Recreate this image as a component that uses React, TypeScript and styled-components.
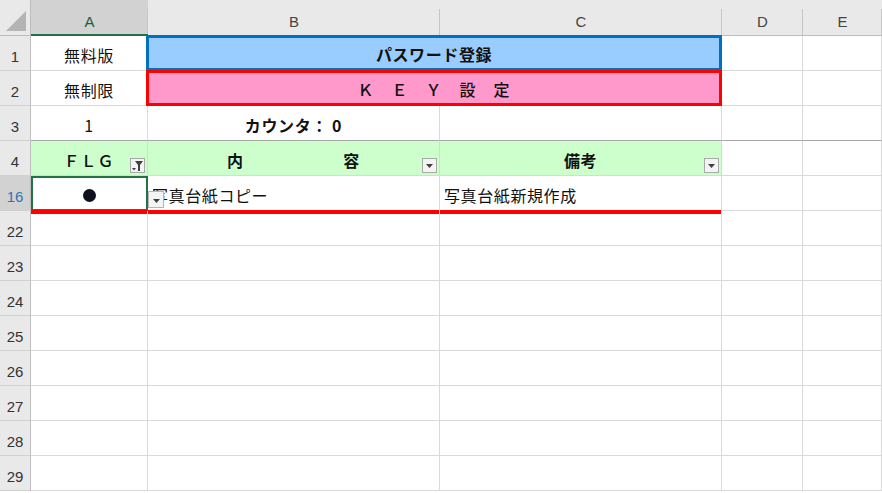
import React from 'react';
import styled, { createGlobalStyle } from 'styled-components';

const GlobalStyle = createGlobalStyle`
  html, body {
    margin: 0;
    padding: 0;
    background: #ffffff;
    overflow: hidden;
  }
  body {
    font-family: "Noto Sans CJK JP", "Noto Sans", sans-serif;
  }
`;

const GRID = '#d9d9d9';
const HEAD_BG = '#e9e9e9';
const HEAD_LINE = '#bdbdbd';

type Fill = 'blue' | 'pink' | 'green' | 'none';

const fills: Record<Fill, { bg: string; border: string }> = {
  blue: { bg: '#99ccff', border: '#0070c0' },
  pink: { bg: '#ff99cc', border: '#ff0000' },
  green: { bg: '#ccffcc', border: 'transparent' },
  none: { bg: '#ffffff', border: 'transparent' },
};

const Sheet = styled.div`
  display: grid;
  grid-template-columns: 31px 117px 292px 282px 81px 79px;
  grid-template-rows: 36px repeat(13, 35px);
  width: 882px;
  height: 493px;
  background: #ffffff;
  color: #111111;
`;

const Corner = styled.div`
  background: ${HEAD_BG};
  border-right: 1px solid ${HEAD_LINE};
  border-bottom: 1px solid ${HEAD_LINE};
  box-sizing: border-box;
  position: relative;

  &::after {
    content: '';
    position: absolute;
    right: 4px;
    bottom: 4px;
    width: 0;
    height: 0;
    border-left: 20px solid transparent;
    border-bottom: 20px solid #b4b4b4;
  }
`;

const ColHead = styled.div<{ $active?: boolean }>`
  position: relative;
  display: flex;
  align-items: center;
  justify-content: center;
  padding-top: 8px;
  box-sizing: border-box;
  background: ${(p) => (p.$active ? '#d2d2d2' : HEAD_BG)};
  border-bottom: ${(p) => (p.$active ? '2px solid #217346' : `1px solid ${HEAD_LINE}`)};
  font-family: "Liberation Sans", Arial, sans-serif;
  font-size: 15px;
  color: ${(p) => (p.$active ? '#1e5c38' : '#444444')};

  &::after {
    content: '';
    position: absolute;
    right: 0;
    top: 9px;
    bottom: 0;
    width: 1px;
    background: #c6c6c6;
  }
`;

const RowHead = styled.div<{ $active?: boolean; $filtered?: boolean }>`
  display: flex;
  align-items: center;
  justify-content: center;
  padding-top: 6px;
  box-sizing: border-box;
  background: ${(p) => (p.$active ? '#d2d2d2' : HEAD_BG)};
  border-right: 1px solid ${HEAD_LINE};
  border-bottom: 1px solid #d0d0d0;
  font-family: "Liberation Sans", Arial, sans-serif;
  font-size: 15px;
  color: ${(p) => (p.$filtered ? '#2e75b6' : '#333333')};
`;

const Cell = styled.div<{
  $fill?: Fill;
  $span?: number;
  $align?: 'left' | 'center';
  $bold?: boolean;
  $freeze?: boolean;
  $underline?: boolean;
}>`
  position: relative;
  grid-column: span ${(p) => p.$span ?? 1};
  display: flex;
  align-items: center;
  justify-content: ${(p) => (p.$align === 'left' ? 'flex-start' : 'center')};
  padding: 4px 4px 0;
  box-sizing: border-box;
  background: ${(p) => fills[p.$fill ?? 'none'].bg};
  border-right: 1px solid ${GRID};
  border-bottom: 1px solid ${(p) => (p.$freeze ? '#a6a6a6' : GRID)};
  font-size: 16px;
  letter-spacing: 0.6px;
  font-weight: ${(p) => (p.$bold ? 700 : 400)};
  white-space: pre;

  ${(p) =>
    p.$underline &&
    `
    &::before {
      content: '';
      position: absolute;
      left: 0;
      right: 0;
      bottom: -4px;
      height: 4px;
      background: #ff0000;
      z-index: 2;
    }
  `}
`;

// merged title bands in rows 1 and 2
const Band = styled(Cell)`
  margin: -1px 0 0 -2px;
  width: calc(100% + 2px);
  border: 3px solid ${(p) => fills[p.$fill ?? 'none'].border};
  padding-top: 2px;
  z-index: 1;
`;

const Selected = styled(Cell)`
  outline: 2px solid #217346;
  outline-offset: -2px;
  z-index: 3;
`;

const Label = styled.span<{ $weight?: number }>`
  font-weight: ${(p) => p.$weight ?? 400};
  letter-spacing: 1px;
`;

const FilterButton = styled.span`
  position: absolute;
  right: 2px;
  bottom: 2px;
  width: 15px;
  height: 15px;
  box-sizing: border-box;
  background: #f4f4f4;
  border: 1px solid #a9a9a9;
  display: flex;
  align-items: center;
  justify-content: center;
`;

const DropButton = styled.span`
  position: absolute;
  left: calc(100% + 1px);
  bottom: 2px;
  width: 16px;
  height: 17px;
  box-sizing: border-box;
  background: #f4f4f4;
  border: 1px solid #b5b5b5;
  display: flex;
  align-items: flex-end;
  justify-content: center;
  padding-bottom: 4px;
  z-index: 4;
`;

const Dot = styled.span`
  width: 13px;
  height: 13px;
  border-radius: 50%;
  background: #0f0f1e;
`;

const Arrow = () => (
  <svg width="7" height="4" viewBox="0 0 7 4">
    <path d="M0 0 H7 L3.5 4 Z" fill="#404040" />
  </svg>
);

const FunnelArrow = () => (
  <svg width="11" height="10" viewBox="0 0 11 10">
    <path d="M3 0 H11 L8 4 V10 H6 V4 Z" fill="#404040" />
    <path d="M0 7 H4 L2 9.5 Z" fill="#404040" />
  </svg>
);

const Empty = ({ freeze }: { freeze?: boolean }) => <Cell $freeze={freeze} />;

const blankRows = [22, 23, 24, 25, 26, 27, 28, 29];

export default function App() {
  return (
    <>
      <GlobalStyle />
      <Sheet>
        <Corner />
        <ColHead $active>A</ColHead>
        <ColHead>B</ColHead>
        <ColHead>C</ColHead>
        <ColHead>D</ColHead>
        <ColHead>E</ColHead>

        <RowHead>1</RowHead>
        <Cell>無料版</Cell>
        <Band $span={2} $fill="blue" $bold>
          パスワード登録
        </Band>
        <Empty />
        <Empty />

        <RowHead>2</RowHead>
        <Cell>無制限</Cell>
        <Band $span={2} $fill="pink">
          <Label $weight={500}>Ｋ　Ｅ　Ｙ　設　定</Label>
        </Band>
        <Empty />
        <Empty />

        <RowHead>3</RowHead>
        <Cell $freeze>1</Cell>
        <Cell $freeze $bold>
          カウンタ： 0
        </Cell>
        <Empty freeze />
        <Empty freeze />
        <Empty freeze />

        <RowHead>4</RowHead>
        <Cell $fill="green">
          <Label $weight={500}>ＦＬＧ</Label>
          <FilterButton>
            <FunnelArrow />
          </FilterButton>
        </Cell>
        <Cell $fill="green" $bold>
          内　　　　　　容
          <FilterButton>
            <Arrow />
          </FilterButton>
        </Cell>
        <Cell $fill="green" $bold>
          備考
          <FilterButton>
            <Arrow />
          </FilterButton>
        </Cell>
        <Empty />
        <Empty />

        <RowHead $active $filtered>
          16
        </RowHead>
        <Selected $underline>
          <Dot />
          <DropButton>
            <Arrow />
          </DropButton>
        </Selected>
        <Cell $align="left" $underline>
          写真台紙コピー
        </Cell>
        <Cell $align="left" $underline>
          写真台紙新規作成
        </Cell>
        <Empty />
        <Empty />

        {blankRows.map((n) => (
          <React.Fragment key={n}>
            <RowHead>{n}</RowHead>
            <Empty />
            <Empty />
            <Empty />
            <Empty />
            <Empty />
          </React.Fragment>
        ))}
      </Sheet>
    </>
  );
}
